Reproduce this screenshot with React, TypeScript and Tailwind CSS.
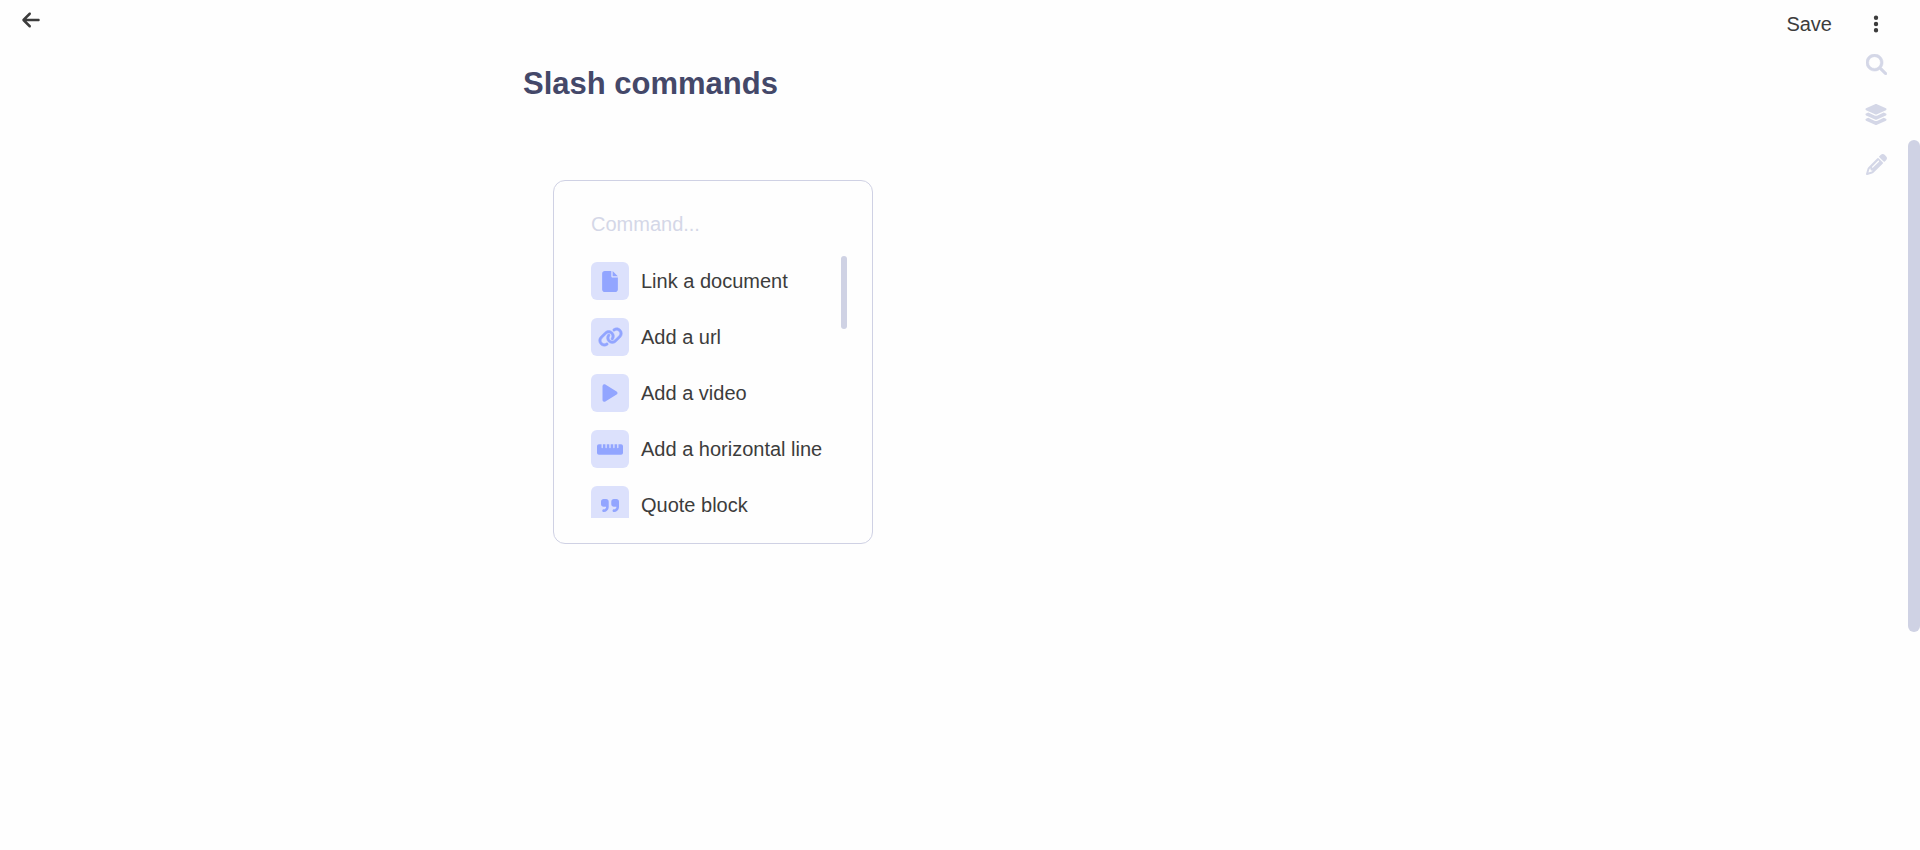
import { useState } from "react";
import type { ComponentType } from "react";
import {
  FaArrowLeft,
  FaEllipsisVertical,
  FaFile,
  FaLayerGroup,
  FaLink,
  FaPencil,
  FaPlay,
  FaQuoteRight,
  FaRulerHorizontal,
} from "react-icons/fa6";

type Icon = ComponentType<{ className?: string }>;

function SearchIcon({ className }: { className?: string }) {
  return (
    <svg
      viewBox="0 0 512 512"
      fill="currentColor"
      stroke="currentColor"
      strokeWidth="14"
      aria-hidden="true"
      className={className}
    >
      <path d="M416 208c0 45.9-14.9 88.3-40 122.7L502.6 457.4c12.5 12.5 12.5 32.8 0 45.3s-32.8 12.5-45.3 0L330.7 376c-34.4 25.2-76.8 40-122.7 40C93.1 416 0 322.9 0 208S93.1 0 208 0S416 93.1 416 208zM208 352a144 144 0 1 0 0-288 144 144 0 1 0 0 288z" />
    </svg>
  );
}

const commands: { label: string; Icon: Icon; size: string }[] = [
  { label: "Link a document", Icon: FaFile, size: "h-[21px] w-4" },
  { label: "Add a url", Icon: FaLink, size: "h-5 w-[25px] stroke-current stroke-[12]" },
  { label: "Add a video", Icon: FaPlay, size: "h-5 w-4" },
  { label: "Add a horizontal line", Icon: FaRulerHorizontal, size: "h-[21px] w-[26px]" },
  { label: "Quote block", Icon: FaQuoteRight, size: "h-[21px] w-[18px]" },
];

const tools: { label: string; Icon: Icon; size: string }[] = [
  { label: "Search", Icon: SearchIcon, size: "h-[21px] w-[21px]" },
  { label: "Layers", Icon: FaLayerGroup, size: "h-[21px] w-6" },
  { label: "Edit", Icon: FaPencil, size: "h-[21px] w-[21px]" },
];

function CommandMenu() {
  const [query, setQuery] = useState("");
  const visible = commands.filter((c) =>
    c.label.toLowerCase().includes(query.toLowerCase()),
  );

  return (
    <section className="ml-[30px] w-80 rounded-xl border border-[#cfd1e4] pt-[23px] pr-[25px] pb-[25px] pl-[37px]">
      <input
        type="text"
        aria-label="Command"
        placeholder="Command..."
        value={query}
        onChange={(e) => setQuery(e.target.value)}
        className="h-10 w-full bg-transparent text-[20px] outline-none placeholder:text-[#d4d7e7]"
      />
      <div className="mt-3 flex h-[262px] overflow-hidden">
        <ul className="flex min-w-0 flex-1 flex-col gap-[18px] pt-1.5">
          {visible.map(({ label, Icon, size }) => (
            <li key={label} className="shrink-0">
              <button type="button" className="flex items-center gap-3 whitespace-nowrap">
                <span className="flex size-[38px] items-center justify-center rounded-md bg-[#dce1fc] text-[#92a5ff]">
                  <Icon className={size} />
                </span>
                <span>{label}</span>
              </button>
            </li>
          ))}
        </ul>
        <div className="h-[73px] w-1.5 rounded-full bg-[#cfd2e4]" />
      </div>
    </section>
  );
}

export default function App() {
  return (
    <div className="flex min-h-screen bg-[#fefefe] font-['Liberation_Sans',Arial,sans-serif] text-[20px] leading-6 text-[#3c3c3c]">
      <div className="grid flex-1 grid-cols-[1fr_minmax(0,862px)_1fr]">
        <div className="pt-2.5 pl-[22px]">
          <button type="button" aria-label="Back" className="block">
            <FaArrowLeft className="h-5 w-[18px]" />
          </button>
        </div>

        <main className="pt-16">
          <h1 className="mb-[76px] text-[31px] leading-10 font-bold text-[#444869]">
            Slash commands
          </h1>
          <CommandMenu />
        </main>

        <div className="flex items-start justify-end gap-5 pr-2">
          <button type="button" className="mt-3">
            Save
          </button>
          <div className="flex flex-col items-center">
            <button
              type="button"
              aria-label="More options"
              className="flex h-12 w-12 items-center justify-center"
            >
              <FaEllipsisVertical className="h-5 w-5" />
            </button>
            {tools.map(({ label, Icon, size }) => (
              <button
                key={label}
                type="button"
                aria-label={label}
                className="flex h-[50px] w-12 justify-center pt-1.5 text-[#d4d7e7]"
              >
                <Icon className={size} />
              </button>
            ))}
          </div>
        </div>
      </div>
      <div className="w-3 pt-[140px]">
        <div className="h-[492px] rounded-full bg-[#cfd2e4]" />
      </div>
    </div>
  );
}
